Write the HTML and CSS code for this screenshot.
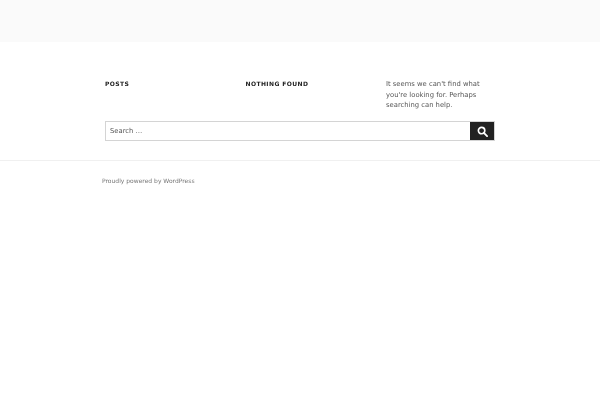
FILE: index.html
```html
<!DOCTYPE html>
<html lang="en">
<head>
    <meta charset="UTF-8">
    <meta name="viewport" content="width=device-width, initial-scale=1.0">
    <title>Posts</title>
    <link rel="stylesheet" href="styles.css">
</head>
<body>
    <header class="site-header"></header>

    <main class="site-content">
        <div class="columns">
            <h2 class="page-title">Posts</h2>
            <h1 class="page-title">Nothing Found</h1>
            <p class="notice">It seems we can't find what you're looking for. Perhaps searching can help.</p>
        </div>
        <form class="search-form">
            <input class="search-field" type="search" placeholder="Search …">
            <button class="search-submit" type="button" aria-label="Search">
                <svg viewBox="0 0 24 24" width="11" height="11">
                    <circle cx="10" cy="10" r="7" fill="none" stroke="#fff" stroke-width="3.6"/>
                    <path d="M15 15l7 7" stroke="#fff" stroke-width="4" stroke-linecap="round"/>
                </svg>
            </button>
        </form>
    </main>

    <footer class="site-footer">
        <a class="site-info" href="#">Proudly powered by WordPress</a>
    </footer>
</body>
</html>
```

FILE: styles.css
```css
* {
    box-sizing: border-box;
}

body {
    margin: 0;
    background: #fff;
    color: #555;
    font-family: "DejaVu Sans", Verdana, sans-serif;
    font-size: 7px;
}

.site-header {
    height: 42px;
    background: #fafafa;
}

/* own layer, so the small text gets grey antialiasing */
.site-content,
.site-footer {
    will-change: transform;
}

.site-content {
    padding: 36px 105px 19px;
}

.columns {
    display: grid;
    grid-template-columns: 140.5px 140.5px 1fr;
    height: 43px;
}

.page-title {
    margin: 0;
    padding-top: 1px;
    color: #222;
    font-size: 6px;
    font-weight: 700;
    line-height: 10px;
    letter-spacing: 0.4px;
    text-transform: uppercase;
}

.notice {
    margin: 0;
    padding-top: 1px;
    font-size: 6.8px;
    line-height: 10.5px;
}

.search-form {
    display: flex;
    height: 20px;
    border: 1px solid #d4d4d4;
}

.search-field {
    flex: 1;
    min-width: 0;
    padding: 0 4px;
    border: 0;
    outline: 0;
    background: #fff;
    color: #555;
    font-family: inherit;
    font-size: 6.8px;
}

.search-field::placeholder {
    color: #555;
    opacity: 1;
}

.search-submit {
    display: flex;
    align-items: center;
    justify-content: center;
    width: 24px;
    padding: 0;
    border: 0;
    background: #222;
}

.site-footer {
    padding: 15px 102px;
    border-top: 1px solid #f0f0f0;
}

.site-info {
    color: #777;
    font-size: 6px;
    line-height: 10px;
    text-decoration: none;
}
```
